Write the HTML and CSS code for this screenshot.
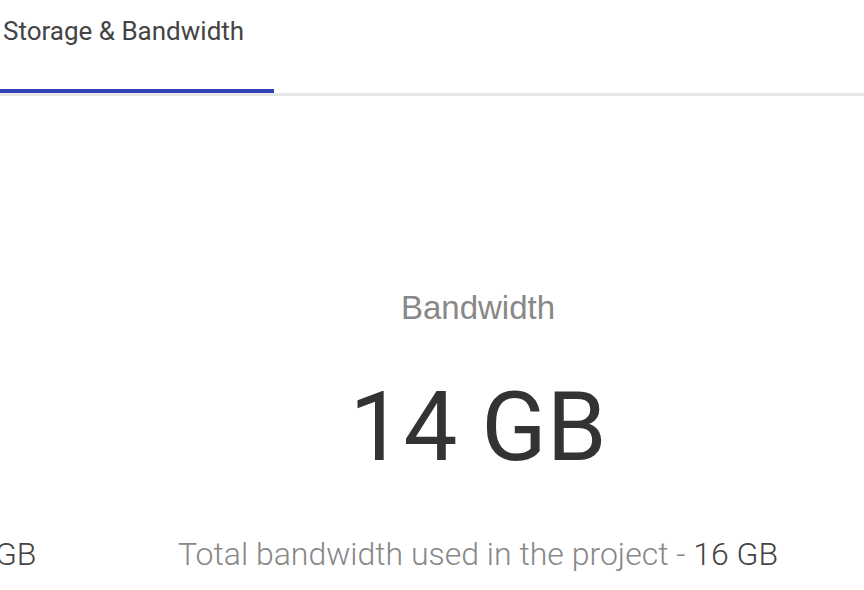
FILE: index.html
```html
<!DOCTYPE html>
<html lang="en">
<head>
<meta charset="utf-8">
<title>Storage &amp; Bandwidth</title>
<link rel="stylesheet" href="styles.css">
</head>
<body>
<div class="page">
  <nav class="tabs">
    <div class="tab tab-active">Storage &amp; Bandwidth</div>
  </nav>
  <main class="stats">
    <section class="stat">
      <div class="stat-label">Storage</div>
      <div class="stat-value">2 GB</div>
      <div class="stat-foot">Total storage used in the project - <span class="stat-total">2 GB</span></div>
    </section>
    <section class="stat">
      <div class="stat-label">Bandwidth</div>
      <div class="stat-value">14 GB</div>
      <div class="stat-foot">Total bandwidth used in the project - <span class="stat-total">16 GB</span></div>
    </section>
  </main>
</div>
</body>
</html>
```
FILE: styles.css
```css
html, body {
  margin: 0;
  padding: 0;
  background: #ffffff;
}
body {
  font-family: Roboto, "Liberation Sans", sans-serif;
  width: 864px;
  height: 590px;
  overflow: hidden;
}
.page {
  width: 864px;
  height: 590px;
  overflow: hidden;
}
.tabs {
  display: flex;
  height: 93px;
  border-bottom: 3px solid #e6e6e6;
}
.tab {
  box-sizing: border-box;
  width: 274px;
  padding: 16px 0 0 3px;
  font-size: 26px;
  line-height: 30px;
  color: #444444;
  white-space: nowrap;
}
.tab-active {
  border-bottom: 4px solid #2f43b5;
}
.stats {
  display: grid;
  grid-template-columns: 712px 712px;
  margin-left: -590px;
  padding-top: 192px;
}
.stat {
  display: flex;
  flex-direction: column;
  align-items: center;
  text-align: center;
  white-space: nowrap;
}
.stat-label {
  font-family: "Liberation Sans", Arial, sans-serif;
  font-size: 33px;
  line-height: 40px;
  color: #888888;
}
.stat-value {
  margin-top: 49px;
  font-size: 96px;
  line-height: 100px;
  color: #333333;
}
.stat-foot {
  margin-top: 59px;
  font-size: 32px;
  font-weight: 300;
  line-height: 36px;
  color: #888888;
}
.stat-total {
  color: #444444;
}
```
